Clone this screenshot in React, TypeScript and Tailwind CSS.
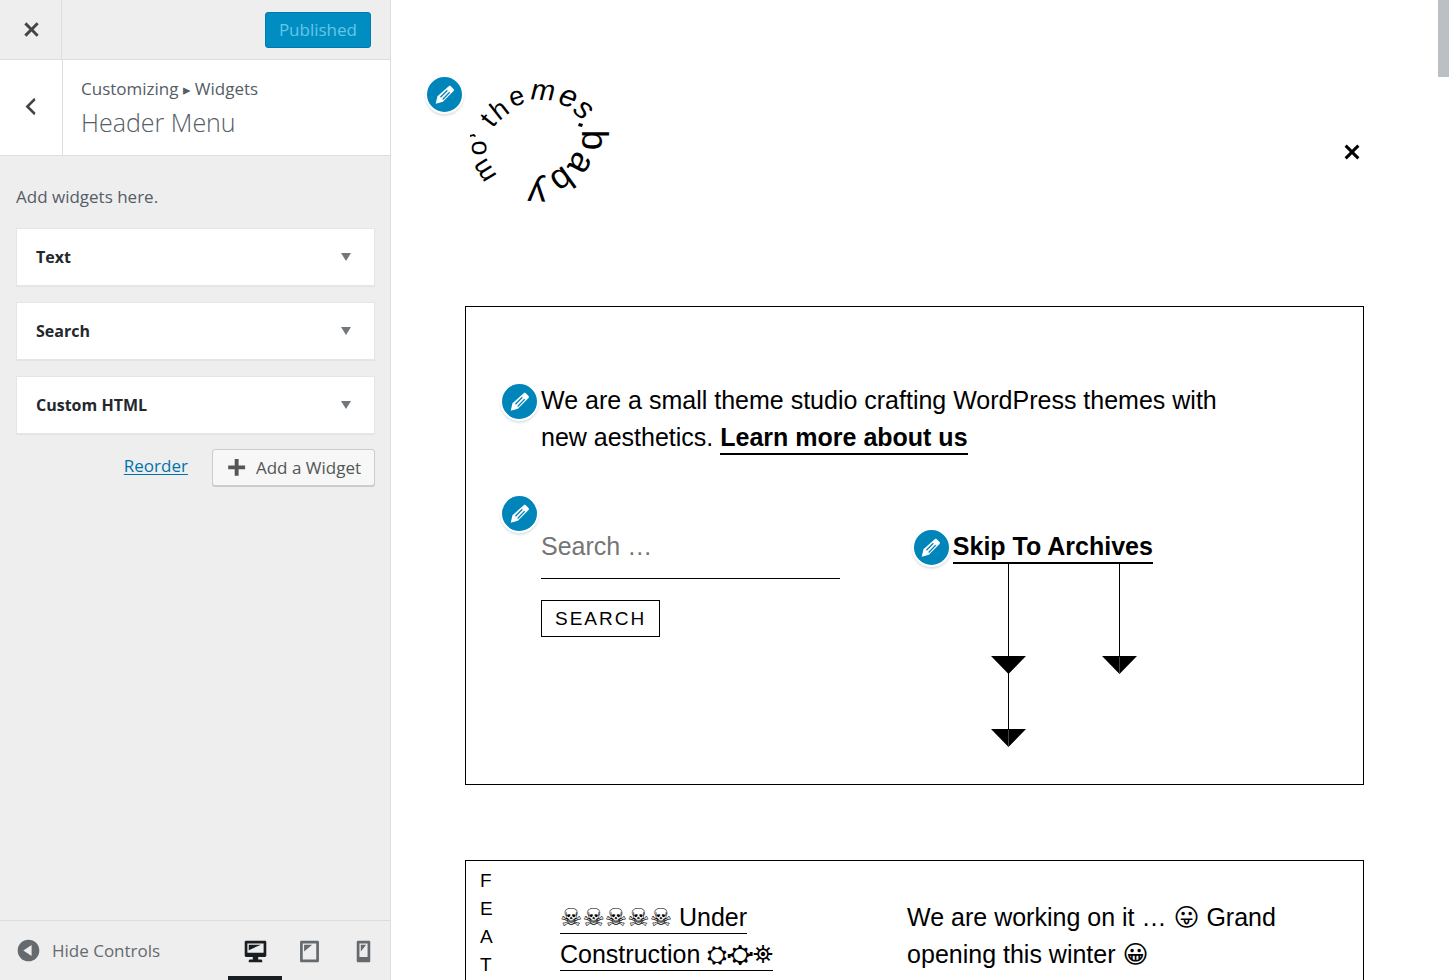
import React from "react";

type IconProps = { path: string; className: string };

const icons = {
  close:
    "M14.95 6.46L11.41 10l3.54 3.54-1.41 1.41L10 11.42l-3.53 3.53-1.42-1.42L8.58 10 5.05 6.47l1.42-1.42L10 8.58l3.54-3.53z",
  back: "M14 5l-5 5 5 5-1 2-7-7 7-7z",
  plus: "M17 8v3h-5v5H9v-5H4V8h5V3h3v5h5z",
  down: "M5 6h10l-5 8z",
  desktop:
    "M3 2h14c.55 0 1 .45 1 1v10c0 .55-.45 1-1 1h-5v2h2c.55 0 1 .45 1 1v1H5v-1c0-.55.45-1 1-1h2v-2H3c-.55 0-1-.45-1-1V3c0-.55.45-1 1-1zm13 9V4H4v7h12zM5 5h9L5 9V5z",
  tablet:
    "M4 2h12c.55 0 1 .45 1 1v14c0 .55-.45 1-1 1H4c-.55 0-1-.45-1-1V3c0-.55.45-1 1-1zm11 14V4H5v12h10zM6 5h6l-6 5V5z",
  phone:
    "M6 2h8c.55 0 1 .45 1 1v14c0 .55-.45 1-1 1H6c-.55 0-1-.45-1-1V3c0-.55.45-1 1-1zm7 12V4H7v10h6zM8 5h4l-4 5V5z",
  collapse: "M10 2a8 8 0 1 0 0 16 8 8 0 0 0 0-16zm2.3 4v8L6.2 10z",
};

function Icon({ path, className }: IconProps) {
  return (
    <svg viewBox="0 0 20 20" fill="currentColor" aria-hidden="true" className={className}>
      <path d={path} />
    </svg>
  );
}

function EditBadge({ label, className }: { label: string; className: string }) {
  return (
    <button
      type="button"
      aria-label={label}
      className={`absolute flex size-[39px] items-center justify-center rounded-full border-2 border-white bg-[#0085ba] text-white shadow-[0_2px_2px_rgba(46,68,83,0.15)] ${className}`}
    >
      <svg viewBox="0 0 20 20" fill="none" aria-hidden="true" className="size-[26px]">
        <path
          d="M12.900 3.200c.45-.4 1.100-.35 1.550.1l2.100 2.150c.45.46.42 1.150.03 1.550l-8.200 8.200-5.500 1.500 1.300-5.700z"
          fill="#fff"
        />
        <path d="M6.500 11.700l5.300-5.400M8.200 13.400l5.400-5.500" stroke="#0085ba" strokeWidth="1" />
      </svg>
    </button>
  );
}

const logoLetters = [
  { c: "m", x: 65, y: 111, r: -122, s: 27, rise: 0.27, i: false },
  { c: "o", x: 59, y: 89, r: -92, s: 27, rise: 0.27, i: false },
  { c: "t", x: 68, y: 61, r: -52, s: 27, rise: 0.33, i: false },
  { c: "h", x: 79, y: 50, r: -38, s: 27, rise: 0.36, i: false },
  { c: "e", x: 97, y: 39, r: -18, s: 27, rise: 0.27, i: false },
  { c: "m", x: 123, y: 33, r: 3, s: 29, rise: 0.27, i: true },
  { c: "e", x: 148, y: 39, r: 20, s: 31, rise: 0.27, i: true },
  { c: "s", x: 163, y: 51, r: 42, s: 31, rise: 0.27, i: true },
  { c: "b", x: 175, y: 81, r: 90, s: 37, rise: 0.36, i: false },
  { c: "a", x: 160, y: 104, r: 118, s: 36, rise: 0.27, i: false },
  { c: "b", x: 143, y: 122, r: 144, s: 35, rise: 0.36, i: false },
  { c: "y", x: 117, y: 129, r: 183, s: 36, rise: 0.16, i: false },
];

function Logo() {
  return (
    <svg viewBox="50 23 142 122" role="img" aria-label="mo' themes.baby" className="h-[122px] w-[142px] overflow-visible">
      {logoLetters.map((l, n) => (
        <text
          key={n}
          transform={`translate(${l.x} ${l.y}) rotate(${l.r})`}
          y={l.s * l.rise}
          textAnchor="middle"
          fontSize={l.s}
          fontStyle={l.i ? "italic" : "normal"}
        >
          {l.c}
        </text>
      ))}
      <path d="M50 76l4-1 2 2-1 1-2-1-3 1z" />
      <path d="M159 64l4 1-1 3-4-1z" />
    </svg>
  );
}

const widgets = ["Text", "Search", "Custom HTML"];
const devices = [
  { name: "Desktop", path: icons.desktop, active: true },
  { name: "Tablet", path: icons.tablet, active: false },
  { name: "Mobile", path: icons.phone, active: false },
];

function Sidebar() {
  return (
    <aside className="flex w-[391px] shrink-0 flex-col border-r border-[#ddd] bg-[#eee] font-['Open_Sans',sans-serif] text-[17px] text-[#555d66]">
      <div className="flex h-[60px] items-center justify-between border-b border-[#ddd] pr-[19px]">
        <button type="button" aria-label="Close" className="flex h-full w-[62px] items-center justify-center border-r border-[#ddd] pl-px text-[#444]">
          <Icon path={icons.close} className="size-[29px]" />
        </button>
        <button type="button" className="h-9 rounded-[3px] border border-[#0079b2] bg-[#008ec2] px-[13px] text-[#66c6e4]">
          Published
        </button>
      </div>
      <div className="flex h-24 border-b border-[#ddd] bg-white">
        <button type="button" aria-label="Back" className="flex w-[63px] items-center justify-center border-r border-[#ddd] pr-[2px] pb-[2px] text-[#444]">
          <Icon path={icons.back} className="size-[25px]" />
        </button>
        <div className="flex flex-col pt-[17px] pl-[18px]">
          <span className="leading-6">
            Customizing <span className="font-['DejaVu_Sans',sans-serif] text-[15px]">▸</span> Widgets
          </span>
          <h1 className="text-[25px] leading-10 font-light">Header Menu</h1>
        </div>
      </div>
      <div className="flex flex-1 flex-col pt-[29px] pr-[15px] pl-4">
        <p className="leading-6">Add widgets here.</p>
        <ul className="mt-[19px] flex flex-col gap-4">
          {widgets.map((w) => (
            <li key={w}>
              <button
                type="button"
                className="flex h-[58px] w-full items-center justify-between border border-[#e5e5e5] bg-white pr-[18px] pl-[19px] text-[16px] font-bold text-[#23282d] shadow-[0_1px_1px_rgba(0,0,0,0.04)]"
              >
                {w}
                <Icon path={icons.down} className="size-5 text-[#72777c]" />
              </button>
            </li>
          ))}
        </ul>
        <div className="mt-[15px] flex items-start justify-end gap-6">
          <a href="#reorder" className="leading-[34px] text-[#0073aa] underline underline-offset-2">Reorder</a>
          <button type="button" className="flex h-[37px] items-center gap-[7px] rounded-[3px] border border-[#ccc] bg-[#f7f7f7] pr-[13px] pl-[10px] text-[#555] shadow-[0_1px_0_#ccc]">
            <Icon path={icons.plus} className="size-[26px]" />
            Add a Widget
          </button>
        </div>
      </div>
      <footer className="flex h-[60px] items-stretch justify-between border-t border-[#ddd] pl-[15px]">
        <button type="button" className="flex items-center gap-[10px] text-[#656a6f]">
          <Icon path={icons.collapse} className="size-[27px]" />
          Hide Controls
        </button>
        <div className="flex">
          {devices.map((d) => (
            <button
              key={d.name}
              type="button"
              aria-label={d.name}
              className={`flex w-[54px] items-center justify-center border-b-4 pt-[6px] ${d.active ? "border-[#191e23] text-[#191e23]" : "border-transparent text-[#656a6f]"}`}
            >
              <Icon path={d.path} className="size-[27px]" />
            </button>
          ))}
        </div>
      </footer>
    </aside>
  );
}

function Arrows() {
  return (
    <svg viewBox="0 0 148 182" aria-hidden="true" className="ml-[37px] block h-[182px] w-[148px] overflow-visible">
      <path d="M18.500 -2V182M129.500 -2V109" stroke="#000" fill="none" />
      <path d="M1 91h35l-17.500 18zM1 164h35l-17.500 18zM112 91h35l-17.500 18z" />
      <path d="M18.500 165V182M129.500 92V109" stroke="#444" fill="none" />
    </svg>
  );
}

function Preview() {
  return (
    <main className="min-w-0 flex-1 overflow-hidden bg-white px-[74px] font-['Liberation_Sans','DejaVu_Sans',sans-serif] text-[25px] leading-[37px] text-black">
      <header className="relative flex items-center justify-between pt-[82px] pb-[102px]">
        <EditBadge label="Edit logo" className="top-[75px] -left-10" />
        <a href="#home" className="ml-[5px] block">
          <Logo />
        </a>
        <button type="button" aria-label="Close menu" className="mt-[18px] -mr-[3px]">
          <Icon path={icons.close} className="size-[30px]" />
        </button>
      </header>

      <section className="border border-black px-[75px] pt-[75px] pb-[37px]">
        <div className="relative">
          <EditBadge label="Edit text widget" className="top-0 -left-[41px]" />
          <p className="max-w-[700px]">
            We are a small theme studio crafting WordPress themes with new aesthetics.{" "}
            <a href="#about" className="border-b-2 border-black pb-[2px] font-bold">Learn more about us</a>
          </p>
        </div>
        <div className="mt-[58px] grid grid-cols-[8fr_3fr_9fr]">
          <form className="relative min-w-0" onSubmit={(e) => e.preventDefault()}>
            <EditBadge label="Edit search widget" className="-top-5 -left-[41px]" />
            <input
              type="search"
              aria-label="Search"
              placeholder="Search …"
              className="block h-[65px] w-full border-b border-black bg-transparent outline-none placeholder:text-[#757575]"
            />
            <button type="submit" className="mt-[21px] h-[37px] border border-black px-[13px] text-[19px] leading-7 tracking-[2px]">
              SEARCH
            </button>
          </form>
          <div className="relative col-start-3 ml-px pt-[14px]">
            <EditBadge label="Edit archives widget" className="top-[14px] -left-[41px]" />
            <a href="#archives" className="block w-fit leading-[37px]">
              <span className="border-b-2 border-black pb-[2px] font-bold">Skip To Archives</span>
            </a>
            <Arrows />
          </div>
        </div>
      </section>

      <section className="mt-[75px] flex border border-black pt-[6px] pr-[75px] pb-[75px] pl-[14px]">
        <div className="flex w-20 shrink-0 flex-col text-[19px] leading-7">
          {["F", "E", "A", "T"].map((c) => (
            <span key={c}>{c}</span>
          ))}
        </div>
        <article className="grid flex-1 grid-cols-[5fr_7fr] gap-[75px] pt-8">
          <h2>
            <a href="#construction" className="border-b border-black pb-[2px]">☠☠☠☠☠ Under Construction ⛭⛮⛯</a>
          </h2>
          <p>We are working on it … 😛 Grand opening this winter 😀</p>
        </article>
      </section>
    </main>
  );
}

export default function App() {
  return (
    <div className="flex h-screen overflow-hidden bg-white">
      <Sidebar />
      <Preview />
      <div className="w-[11px] shrink-0">
        <div className="h-[77px] bg-[#bbc0c4]" />
      </div>
    </div>
  );
}
